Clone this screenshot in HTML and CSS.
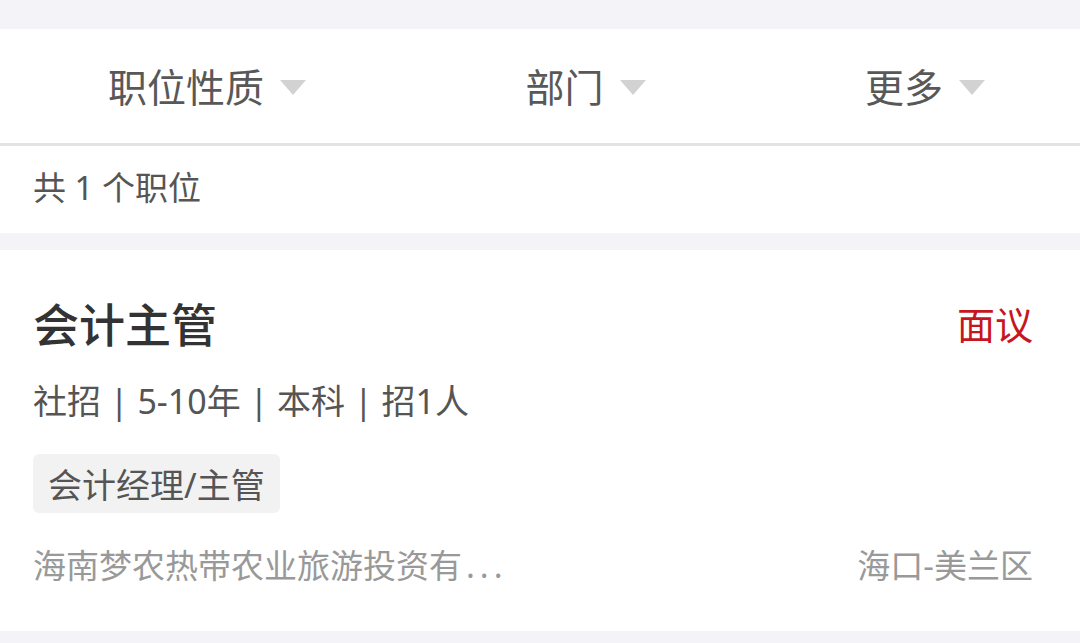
FILE: index.html
```html
<!DOCTYPE html>
<html lang="zh-CN">
<head>
    <meta charset="UTF-8">
    <meta name="viewport" content="width=device-width, initial-scale=1.0">
    <title>职位列表</title>
    <link rel="stylesheet" href="styles.css">
</head>
<body>

    <!-- Filter Bar -->
    <div class="filter-bar">
        <div class="filter-item">
            <span>职位性质</span>
            <span class="arrow"></span>
        </div>
        <div class="filter-item">
            <span>部门</span>
            <span class="arrow"></span>
        </div>
        <div class="filter-item">
            <span>更多</span>
            <span class="arrow"></span>
        </div>
    </div>

    <!-- Count -->
    <div class="count">共 1 个职位</div>

    <!-- Job Card -->
    <div class="job-card">
        <div class="job-head">
            <div class="job-title">会计主管</div>
            <div class="job-salary">面议</div>
        </div>
        <div class="job-meta">社招 | 5-10年 | 本科 | 招1人</div>
        <div class="job-tags">
            <span class="tag">会计经理/主管</span>
        </div>
        <div class="job-foot">
            <div class="company">海南梦农热带农业旅游投资有<span class="dots">...</span></div>
            <div class="location">海口-美兰区</div>
        </div>
    </div>

</body>
</html>
```

FILE: styles.css
```css
body, html {
    margin: 0;
    padding: 0;
    height: 100%;
    font-family: "Noto Sans", "Noto Sans CJK SC", sans-serif;
    background-color: #f4f4f8;
    overflow: hidden;
}

body {
    padding-top: 29px;
    box-sizing: border-box;
}

/* Filter Bar */
.filter-bar {
    height: 114px;
    background-color: #ffffff;
    border-bottom: 3px solid #e3e3e5;
    display: flex;
    justify-content: space-between;
    align-items: center;
    padding: 0 95px 0 108px;
}

.filter-item {
    display: flex;
    align-items: center;
    gap: 16px;
    font-size: 39px;
    color: #585858;
    line-height: 1;
}

.arrow {
    width: 0;
    height: 0;
    border-left: 13px solid transparent;
    border-right: 13px solid transparent;
    border-top: 15px solid #d2d2d2;
    margin-top: 2px;
}

/* Count */
.count {
    height: 79px;
    padding-bottom: 8px;
    background-color: #ffffff;
    display: flex;
    align-items: center;
    padding-left: 33px;
    font-size: 33px;
    color: #555555;
    margin-bottom: 17px;
}

/* Job Card */
.job-card {
    background-color: #ffffff;
    padding: 41px 47px 43px 33px;
}

.job-head {
    display: flex;
    justify-content: space-between;
    align-items: center;
    height: 62px;
}

.job-title {
    font-size: 46px;
    font-weight: 500;
    color: #333333;
}

.job-salary {
    font-size: 38px;
    color: #c8161e;
}

.job-meta {
    margin-top: 24px;
    font-size: 34px;
    line-height: 48px;
    color: #555555;
}

.job-tags {
    margin-top: 29px;
    display: flex;
}

.tag {
    height: 59px;
    display: flex;
    align-items: center;
    padding: 0 15px;
    background-color: #f2f2f2;
    border-radius: 6px;
    font-size: 34px;
    color: #555555;
}

.job-foot {
    margin-top: 31px;
    display: flex;
    justify-content: space-between;
    align-items: center;
    line-height: 44px;
    font-size: 33px;
    color: #999999;
}

.dots {
    letter-spacing: 5px;
    margin-left: 4px;
}
```
